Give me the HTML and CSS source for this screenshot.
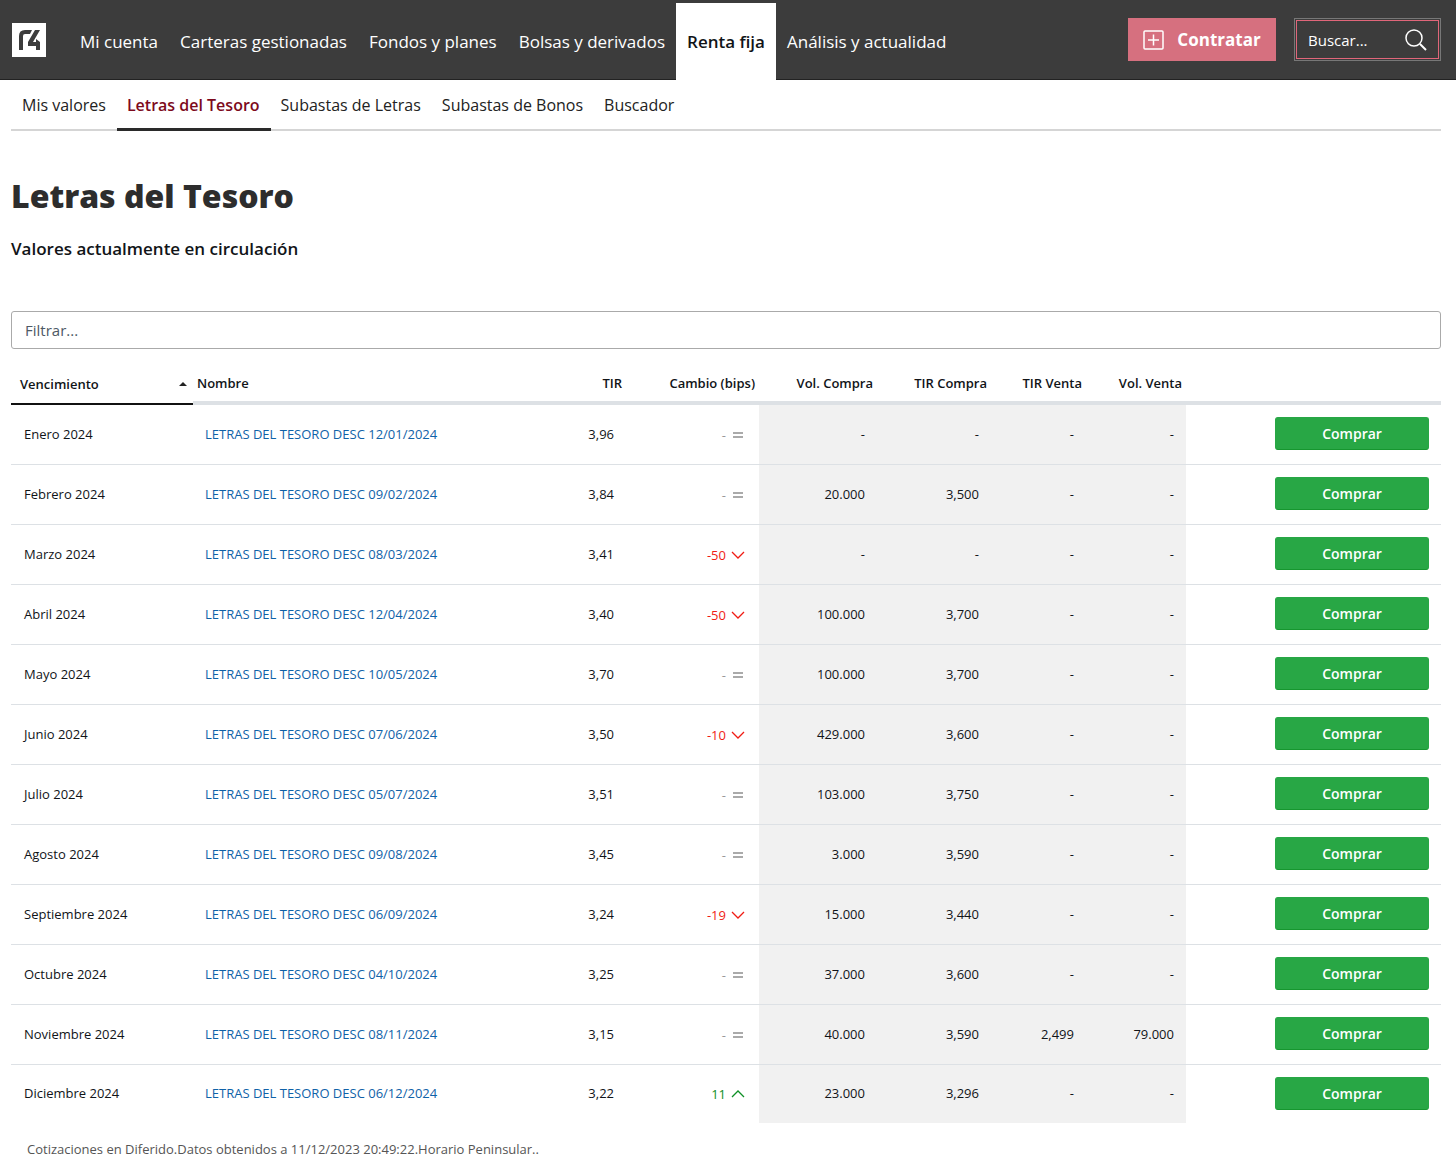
FILE: index.html
```html
<!DOCTYPE html>
<html lang="es">

<head>
  <meta charset="UTF-8">
  <meta name="viewport" content="width=device-width, initial-scale=1.0">
  <title>Letras del Tesoro</title>
  <link rel="stylesheet" href="styles.css">
</head>

<body>

  <!-- Header -->
  <header class="topbar">
    <a href="#" class="logo" aria-label="Inicio">
      <svg width="34" height="34" viewBox="0 0 34 34">
        <rect width="34" height="34" fill="#fff"/>
        <path d="M7 27V13Q7 7 13 7H20L18 11H13Q11 11 11 13V27Z" fill="#3c3c3c"/>
        <path d="M23 7H28L21 19H24V16L28 19V27H24V23H16V19Z" fill="#3c3c3c"/>
      </svg>
    </a>

    <nav class="main-nav">
      <a href="#">Mi cuenta</a>
      <a href="#">Carteras gestionadas</a>
      <a href="#">Fondos y planes</a>
      <a href="#">Bolsas y derivados</a>
      <a href="#" class="active">Renta fija</a>
      <a href="#">Análisis y actualidad</a>
    </nav>

    <button type="button" class="btn-contratar">
      <svg width="22" height="20" viewBox="0 0 22 20" fill="none" stroke="#fff" stroke-width="1.5">
        <rect x="1" y="1" width="19" height="18" rx="1"/>
        <path d="M10.5 4.5v11M5 10h11"/>
      </svg>
      Contratar
    </button>

    <form class="search" onsubmit="return false;">
      <div class="search-inner">
        <input type="text" placeholder="Buscar..." aria-label="Buscar">
        <button type="submit" aria-label="Buscar">
          <svg width="22" height="22" viewBox="0 0 22 22" fill="none" stroke="#fff" stroke-width="1.5">
            <circle cx="9" cy="9" r="8"/>
            <path d="M15 15l6 6" stroke-width="2"/>
          </svg>
        </button>
      </div>
    </form>
  </header>

  <!-- Submenu -->
  <nav class="sub-nav">
    <a href="#">Mis valores</a>
    <a href="#" class="active">Letras del Tesoro</a>
    <a href="#">Subastas de Letras</a>
    <a href="#">Subastas de Bonos</a>
    <a href="#">Buscador</a>
  </nav>

  <!-- Main -->
  <main>
    <h1>Letras del Tesoro</h1>
    <h2>Valores actualmente en circulación</h2>

    <input type="text" id="filter" class="filter" placeholder="Filtrar..." aria-label="Filtrar" onkeyup="filterRows(this.value)">

    <table>
      <colgroup>
        <col class="col-date">
        <col>
        <col class="col-tir">
        <col class="col-change">
        <col class="col-vol-buy">
        <col class="col-tir-buy">
        <col class="col-tir-sell">
        <col class="col-vol-sell">
        <col class="col-action">
      </colgroup>
      <thead>
        <tr>
          <th class="sorted"><div>Vencimiento <span class="arrow"></span></div></th>
          <th class="left">Nombre</th>
          <th>TIR</th>
          <th>Cambio (bips)</th>
          <th>Vol. Compra</th>
          <th>TIR Compra</th>
          <th>TIR Venta</th>
          <th>Vol. Venta</th>
          <th></th>
        </tr>
      </thead>
      <tbody id="rows"></tbody>
    </table>

    <p class="note">Cotizaciones en Diferido.Datos obtenidos a 11/12/2023 20:49:22.Horario Peninsular..</p>
  </main>

  <script src="script.js"></script>
</body>

</html>
```
FILE: styles.css
```css
* {
  box-sizing: border-box;
}

body {
  font-family: "Open Sans", "Noto Sans", sans-serif;
  margin: 0;
  background: #fff;
  color: #111418;
}

a {
  text-decoration: none;
}

/* Header */
.topbar {
  display: flex;
  align-items: center;
  height: 80px;
  padding: 0 15px 0 12px;
  background: #3c3c3c;
  border-bottom: 1px solid #222;
}

.logo {
  display: flex;
  margin-right: 23px;
}

.main-nav {
  display: flex;
  flex: 1;
  align-self: stretch;
  padding-top: 3px;
}

.main-nav a {
  display: flex;
  align-items: center;
  padding: 0 11px;
  color: #fff;
  font-size: 17px;
  white-space: nowrap;
}

.main-nav a.active {
  background: #fff;
  color: #111418;
  font-weight: 600;
  margin-bottom: -1px;
}

.btn-contratar {
  display: flex;
  align-items: center;
  justify-content: center;
  gap: 12px;
  width: 148px;
  height: 43px;
  margin-right: 18px;
  padding: 0;
  border: 0;
  background: #d6707f;
  color: #fff;
  font: 700 17px "Open Sans", "Noto Sans", sans-serif;
}

.search {
  width: 147px;
  padding: 1px;
  border: 1px solid #777;
}

.search-inner {
  display: flex;
  align-items: center;
  height: 39px;
  padding: 0 11px;
  border: 1px solid #e0667a;
}

.search input {
  flex: 1;
  min-width: 0;
  padding: 0;
  border: 0;
  outline: 0;
  background: none;
  color: #fff;
  font: 15px "Open Sans", "Noto Sans", sans-serif;
}

.search input::placeholder {
  color: #fff;
}

.search button {
  display: flex;
  padding: 0;
  border: 0;
  background: none;
}

/* Submenu */
.sub-nav {
  display: flex;
  height: 51px;
  margin: 0 15px 0 11px;
  padding-left: 1px;
  border-bottom: 2px solid #d5d5d5;
}

.sub-nav a {
  height: 51px;
  padding: 0 11px 0 10px;
  color: #222;
  font-size: 16px;
  line-height: 50px;
}

.sub-nav a.active {
  color: #7d0a1c;
  font-weight: 600;
  border-bottom: 3px solid #2a2a2a;
}

main {
  padding: 0 15px 0 11px;
}

h1 {
  margin: 40px 0 0;
  color: #2d2d2d;
  font: 800 32px/50px "Open Sans", "Noto Sans", sans-serif;
}

h2 {
  margin: 16px 0 50px;
  font-size: 17px;
  font-weight: 600;
  line-height: 24px;
}

.filter {
  display: block;
  width: 100%;
  height: 38px;
  padding: 0 13px;
  border: 1px solid #aaa;
  border-radius: 3px;
  font: 15px "Open Sans", "Noto Sans", sans-serif;
}

.filter::placeholder {
  color: #4d5965;
}

/* Table */
table {
  width: 100%;
  margin-top: 16px;
  border-collapse: separate;
  border-spacing: 0;
  table-layout: fixed;
  font-size: 13px;
}

.col-date { width: 182px; }
.col-tir { width: 80px; }
.col-change { width: 133px; }
.col-vol-buy { width: 118px; }
.col-tir-buy { width: 114px; }
.col-tir-sell { width: 95px; }
.col-vol-sell { width: 100px; }
.col-action { width: 255px; }

th {
  height: 40px;
  padding: 0 4px;
  border-bottom: 4px solid #dde1e5;
  font-weight: 600;
  text-align: right;
  white-space: nowrap;
}

th.left {
  text-align: left;
}

th.sorted {
  padding: 0 6px 0 9px;
  border-bottom: 2px solid #111;
}

th.sorted div {
  display: flex;
  align-items: center;
  justify-content: space-between;
}

.arrow {
  border: 4px solid transparent;
  border-top: 0;
  border-bottom-color: #222;
}

td {
  height: 60px;
  padding: 0 12px 2px;
  border-bottom: 1px solid #dde1e5;
  text-align: right;
}

tr:last-child td {
  height: 58px;
  border-bottom: 0;
}

td.left {
  padding-left: 13px;
  text-align: left;
}

td.left + td.left {
  padding-left: 12px;
}

td.shaded {
  background: #f1f1f1;
}

td a {
  color: #0f62a8;
}

.change {
  display: flex;
  align-items: center;
  justify-content: flex-end;
  gap: 5px;
  padding-top: 2px;
  padding-right: 2px;
  color: #999;
}

.change.down { color: #f01c14; }
.change.up { color: #0f9026; }

.btn-comprar {
  width: 154px;
  height: 33px;
  padding: 0;
  border: 1px solid #28a745;
  border-bottom-color: #16962f;
  border-radius: 3px;
  background: #28a745;
  color: #fff;
  font: 600 14px "Open Sans", "Noto Sans", sans-serif;
}

.note {
  margin: 16px;
  color: #555;
  font-size: 13px;
  line-height: 20px;
}
```
FILE: script.js
```js
const data = [
  ["Enero 2024", "12/01/2024", "3,96", 0, "-", "-", "-", "-"],
  ["Febrero 2024", "09/02/2024", "3,84", 0, "20.000", "3,500", "-", "-"],
  ["Marzo 2024", "08/03/2024", "3,41", -50, "-", "-", "-", "-"],
  ["Abril 2024", "12/04/2024", "3,40", -50, "100.000", "3,700", "-", "-"],
  ["Mayo 2024", "10/05/2024", "3,70", 0, "100.000", "3,700", "-", "-"],
  ["Junio 2024", "07/06/2024", "3,50", -10, "429.000", "3,600", "-", "-"],
  ["Julio 2024", "05/07/2024", "3,51", 0, "103.000", "3,750", "-", "-"],
  ["Agosto 2024", "09/08/2024", "3,45", 0, "3.000", "3,590", "-", "-"],
  ["Septiembre 2024", "06/09/2024", "3,24", -19, "15.000", "3,440", "-", "-"],
  ["Octubre 2024", "04/10/2024", "3,25", 0, "37.000", "3,600", "-", "-"],
  ["Noviembre 2024", "08/11/2024", "3,15", 0, "40.000", "3,590", "2,499", "79.000"],
  ["Diciembre 2024", "06/12/2024", "3,22", 11, "23.000", "3,296", "-", "-"]
];

const icons = {
  same: '<path d="M2 4h10M2 8h10" stroke="#aaa" stroke-width="2"/>',
  down: '<path d="M1 3l6 6 6-6"/>',
  up: '<path d="M1 9l6-6 6 6"/>'
};

function changeCell(value) {
  const type = value < 0 ? "down" : value > 0 ? "up" : "same";
  return `<div class="change ${type}">${value || "-"}
    <svg width="14" height="12" viewBox="0 0 14 12" fill="none" stroke="currentColor" stroke-width="1.3">${icons[type]}</svg></div>`;
}

function filterRows(text) {
  document.querySelectorAll("#rows tr").forEach(row => {
    row.hidden = !row.innerText.toLowerCase().includes(text.toLowerCase());
  });
}

document.getElementById("rows").innerHTML = data.map(row => `
  <tr>
    <td class="left">${row[0]}</td>
    <td class="left"><a href="#">LETRAS DEL TESORO DESC ${row[1]}</a></td>
    <td>${row[2]}</td>
    <td>${changeCell(row[3])}</td>
    ${row.slice(4).map(value => `<td class="shaded">${value}</td>`).join("")}
    <td><button type="button" class="btn-comprar">Comprar</button></td>
  </tr>`).join("");
```
